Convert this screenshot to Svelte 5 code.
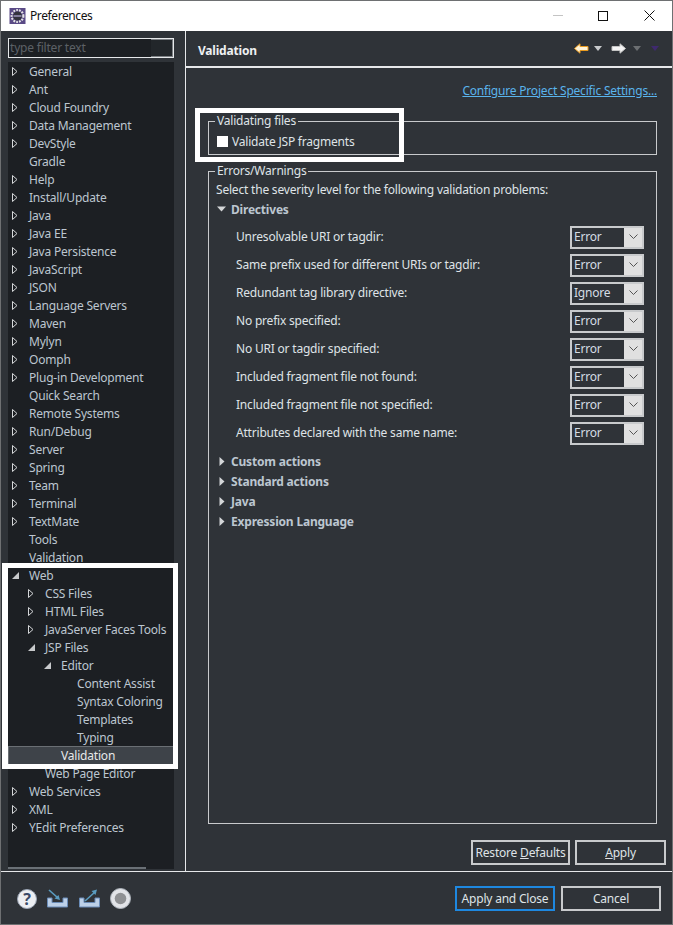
<script>
  const tree = [
    ['General', 0, 'c'], ['Ant', 0, 'c'], ['Cloud Foundry', 0, 'c'], ['Data Management', 0, 'c'],
    ['DevStyle', 0, 'c'], ['Gradle', 0, ''], ['Help', 0, 'c'], ['Install/Update', 0, 'c'],
    ['Java', 0, 'c'], ['Java EE', 0, 'c'], ['Java Persistence', 0, 'c'], ['JavaScript', 0, 'c'],
    ['JSON', 0, 'c'], ['Language Servers', 0, 'c'], ['Maven', 0, 'c'], ['Mylyn', 0, 'c'],
    ['Oomph', 0, 'c'], ['Plug-in Development', 0, 'c'], ['Quick Search', 0, ''], ['Remote Systems', 0, 'c'],
    ['Run/Debug', 0, 'c'], ['Server', 0, 'c'], ['Spring', 0, 'c'], ['Team', 0, 'c'],
    ['Terminal', 0, 'c'], ['TextMate', 0, 'c'], ['Tools', 0, ''], ['Validation', 0, ''],
    ['Web', 0, 'e'], ['CSS Files', 1, 'c'], ['HTML Files', 1, 'c'], ['JavaServer Faces Tools', 1, 'c'],
    ['JSP Files', 1, 'e'], ['Editor', 2, 'e'], ['Content Assist', 3, ''], ['Syntax Coloring', 3, ''],
    ['Templates', 3, ''], ['Typing', 3, ''], ['Validation', 2, '', true], ['Web Page Editor', 1, ''],
    ['Web Services', 0, 'c'], ['XML', 0, 'c'], ['YEdit Preferences', 0, 'c']
  ]
  const directives = [
    ['Unresolvable URI or tagdir:', 'Error'],
    ['Same prefix used for different URIs or tagdir:', 'Error'],
    ['Redundant tag library directive:', 'Ignore'],
    ['No prefix specified:', 'Error'],
    ['No URI or tagdir specified:', 'Error'],
    ['Included fragment file not found:', 'Error'],
    ['Included fragment file not specified:', 'Error'],
    ['Attributes declared with the same name:', 'Error']
  ]
  const sections = ['Custom actions', 'Standard actions', 'Java', 'Expression Language']
</script>

<div class="window">
  <header class="titlebar">
    <svg class="app-icon" width="17" height="16" viewBox="0 0 18 18">
      <rect width="18" height="18" fill="#5a4a86" />
      <circle cx="9" cy="9" r="6.6" fill="none" stroke="#e4e4e4" stroke-width="2.4" stroke-dasharray="2 1.2" />
      <circle cx="9" cy="9" r="5" fill="#33333d" />
      <rect x="4.5" y="8" width="9" height="2" fill="#8c86a8" />
    </svg>
    <span class="title">Preferences</span>
    <div class="win-controls">
      <span class="minimize"></span>
      <span class="maximize"></span>
      <svg width="11" height="11" viewBox="0 0 11 11"><path d="M0.5 0.5L10.5 10.5M10.5 0.5L0.5 10.5" stroke="#111" fill="none" /></svg>
    </div>
  </header>

  <div class="body">
    <aside class="sidebar">
      <div class="filter"><span class="filter-fill">type filter text</span></div>
      <div class="tree">
        {#each tree as [label, depth, state, selected]}
          <div class="tree-row" class:selected>
            <span class="indent" style:width="{depth * 16}px"></span>
            <span class="twisty">
              {#if state === 'c'}
                <svg width="6" height="9" viewBox="0 0 6 9"><path d="M0.5 0.5L5 4.5L0.5 8.5Z" fill="none" stroke="#d4d6d8" /></svg>
              {:else if state === 'e'}
                <svg width="7" height="7" viewBox="0 0 7 7"><path d="M7 0V7H0Z" fill="#c8cacc" /></svg>
              {/if}
            </span>
            <span class="tree-label">{label}</span>
          </div>
        {/each}
        <div class="tree-scroll"></div>
      </div>
    </aside>

    <main class="content">
      <div class="page-head">
        <h1>Validation</h1>
        <div class="nav">
          <svg width="15" height="11" viewBox="0 0 15 11"><path d="M0.5 5.5L6 0.8V3.5H14V7.5H6V10.2Z" fill="#fff4d8" stroke="#e89a20" /></svg>
          <span class="drop light"></span>
          <svg class="fwd" width="15" height="11" viewBox="0 0 15 11"><path d="M14.5 5.5L9 0.8V3.5H1V7.5H9V10.2Z" fill="#f4f4f4" stroke="#c4c4c4" /></svg>
          <span class="drop dim"></span>
          <span class="drop purple"></span>
        </div>
      </div>

      <div class="page-body">
        <div class="link-row"><span class="link">Configure Project Specific Settings...</span></div>

        <fieldset class="group files">
          <legend>Validating files</legend>
          <label class="check"><span class="box"></span>Validate JSP fragments</label>
        </fieldset>

        <fieldset class="group errors">
          <legend>Errors/Warnings</legend>
          <p class="intro">Select the severity level for the following validation problems:</p>
          <div class="section open">
            <svg width="9" height="6" viewBox="0 0 9 6"><path d="M0 0.5H9L4.5 5.5Z" fill="#d4d6d8" /></svg>
            <span>Directives</span>
          </div>
          <div class="rows">
            {#each directives as [label, value]}
              <div class="row">
                <span class="row-label">{label}</span>
                <span class="combo"><span class="combo-value">{value}</span><span class="combo-btn"><svg width="9" height="6" viewBox="0 0 9 6"><path d="M0.5 0.5L4.5 4.5L8.5 0.5" fill="none" stroke="#555" /></svg></span></span>
              </div>
            {/each}
          </div>
          <div class="closed-list">
            {#each sections as name}
              <div class="section">
                <svg width="6" height="9" viewBox="0 0 6 9"><path d="M0.5 0L5.5 4.5L0.5 9Z" fill="#d4d6d8" /></svg>
                <span>{name}</span>
              </div>
            {/each}
          </div>
        </fieldset>

        <div class="page-buttons">
          <button class="btn restore">Restore <u>D</u>efaults</button>
          <button class="btn apply"><u>A</u>pply</button>
        </div>
      </div>
    </main>
  </div>

  <footer class="footer">
    <div class="tools">
      <svg width="20" height="20" viewBox="0 0 20 20"><circle cx="10" cy="10" r="9.5" fill="#eceef2" stroke="#9aa4b4" /><text x="10" y="15.5" text-anchor="middle" class="help-q">?</text></svg>
      <svg width="23" height="20" viewBox="0 0 23 20"><path d="M1.5 9V18H21.5V9H17V13.5H6V9Z" fill="#bcd0e8" stroke="#6a8cb8" /><path d="M3 1L12 9" stroke="#5a9cc0" stroke-width="1.6" /><path d="M14 11L8.5 9.5L12.5 6Z" fill="#5a9cc0" /></svg>
      <svg width="23" height="20" viewBox="0 0 23 20"><path d="M1.5 9V18H21.5V9H17V13.5H6V9Z" fill="#bcd0e8" stroke="#6a8cb8" /><path d="M7 12L17 3" stroke="#5a9cc0" stroke-width="1.6" /><path d="M19 0.5L13.5 2L17.5 6Z" fill="#5a9cc0" /></svg>
      <svg width="21" height="21" viewBox="0 0 21 21"><circle cx="10.5" cy="10.5" r="10" fill="#e2e4e8" stroke="#aeb4bc" /><circle cx="10.5" cy="10.5" r="5.8" fill="#8f9194" /></svg>
    </div>
    <div class="footer-buttons">
      <button class="btn primary">Apply and Close</button>
      <button class="btn cancel">Cancel</button>
    </div>
  </footer>

  <div class="callout tree-callout"></div>
  <div class="callout files-callout"></div>
  <div class="frame"></div>
</div>

<style>
  :global(body) {
    margin: 0;
    background: #2f3338;
  }

  .window {
    position: relative;
    display: flex;
    flex-direction: column;
    width: 673px;
    height: 925px;
    box-sizing: border-box;
    overflow: hidden;
    background: #2f3338;
    color: #dfe3e7;
    font-family: "Noto Sans", "Open Sans", sans-serif;
    font-size: 12px;
    letter-spacing: -0.2px;
  }

  .titlebar {
    display: flex;
    align-items: center;
    flex: 0 0 31px;
    box-sizing: border-box;
    height: 31px;
    padding: 0 0 0 9px;
    background: #fff;
    color: #111;
  }

  .title {
    margin-left: 4px;
    letter-spacing: -0.4px;
  }

  .win-controls {
    display: flex;
    align-items: center;
    margin-left: auto;
  }

  .minimize {
    width: 10px;
    height: 1px;
    margin-right: 35px;
    background: #c4c4c4;
  }

  .maximize {
    width: 8px;
    height: 8px;
    margin-right: 36px;
    border: 1px solid #111;
  }

  .win-controls svg {
    margin-right: 18px;
  }

  .body {
    display: flex;
    height: 840px;
    border-bottom: 1px solid #e6e8ea;
  }

  .sidebar {
    flex: 0 0 186px;
    box-sizing: border-box;
    padding: 7px 11px 0 8px;
    border-right: 1px solid #e6e8ea;
  }

  .filter {
    box-sizing: border-box;
    height: 20px;
    border: 1px solid #e6e8ea;
    background: #22262a;
    overflow: hidden;
    box-shadow: inset 0 0 0 1px #7c8084;
  }

  .filter-fill {
    display: block;
    width: 141px;
    height: 18px;
    padding-left: 1px;
    line-height: 17px;
    background: #1c1f23;
    color: #5c6166;
    white-space: nowrap;
  }

  .tree {
    position: relative;
    height: 807px;
    margin-top: 5px;
    background: #1c1f23;
    color: #bcc6d0;
  }

  .tree-row {
    display: flex;
    align-items: center;
    height: 18px;
    white-space: nowrap;
  }

  .tree-row:first-child {
    margin-top: -1px;
  }

  .tree-row.selected {
    box-sizing: border-box;
    background: #3e4349;
    border: 1px solid #6a6f74;
    border-bottom: 0;
    color: #e6e8ea;
  }

  .tree-row.selected .indent {
    margin-left: -1px;
  }

  .tree-scroll {
    position: absolute;
    left: 0;
    bottom: 0;
    width: 138px;
    height: 2px;
    background: #6a7076;
  }

  .indent {
    flex: none;
  }

  .twisty {
    display: flex;
    flex: 0 0 21px;
    align-items: center;
    justify-content: flex-start;
    padding-left: 4px;
    box-sizing: border-box;
  }

  .content {
    display: flex;
    flex: 1;
    flex-direction: column;
    min-width: 0;
  }

  .page-head {
    display: flex;
    align-items: center;
    justify-content: space-between;
    box-sizing: border-box;
    height: 37px;
    padding: 3px 14px 0 12px;
    border-bottom: 2px solid #e6e8ea;
  }

  h1 {
    margin: 0;
    font-size: 12px;
    font-weight: 700;
    color: #eef0f2;
  }

  .nav {
    display: flex;
    align-items: center;
    margin-top: -3px;
  }

  .drop {
    width: 0;
    height: 0;
    margin-left: 5px;
    border-left: 4.5px solid transparent;
    border-right: 4.5px solid transparent;
    border-top: 5px solid #c8cacc;
  }

  .drop.dim {
    margin-left: 7px;
    border-left-width: 4px;
    border-right-width: 4px;
    border-top-color: #6c6f72;
  }

  .drop.purple {
    margin-left: 10px;
    border-left-width: 4px;
    border-right-width: 4px;
    border-top-color: #3f2a6e;
  }

  .fwd {
    margin-left: 9px;
  }

  .page-body {
    display: flex;
    flex: 1;
    flex-direction: column;
    padding: 0 16px 0 22px;
    min-height: 0;
  }

  .link-row {
    display: flex;
    justify-content: flex-end;
    height: 45px;
    padding-top: 14px;
    box-sizing: border-box;
  }

  .link {
    color: #5ab4ec;
    text-decoration: underline;
  }

  .group {
    margin: 0;
    padding: 0 7px;
    border: 1px solid #c8cacc;
    min-width: 0;
  }

  legend {
    padding: 0 2px;
    margin-left: -1px;
    line-height: 16px;
  }

  .files {
    height: 42px;
    box-sizing: border-box;
  }

  .check {
    display: flex;
    align-items: center;
    height: 20px;
    margin-top: 2px;
  }

  .box {
    width: 11px;
    height: 11px;
    margin: 0 4px 0 1px;
    background: #fff;
  }

  .errors {
    box-sizing: border-box;
    height: 661px;
    margin-top: 8px;
  }

  .intro {
    margin: 2px 0 0;
    line-height: 18px;
  }

  .section {
    display: flex;
    align-items: center;
    height: 20px;
    font-weight: 700;
    color: #bcc6d0;
  }

  .section svg {
    margin: 0 6px 0 3px;
  }

  .section.open svg {
    margin: 0 5px 0 1px;
  }

  .rows {
    display: flex;
    flex-direction: column;
    padding: 4px 0 0 20px;
  }

  .row {
    display: flex;
    align-items: center;
    justify-content: space-between;
    height: 28px;
    padding-right: 5px;
  }

  .row-label {
    padding-bottom: 1px;
  }

  .combo {
    display: flex;
    box-sizing: border-box;
    width: 74px;
    height: 23px;
    border: 2px solid #c8cacc;
  }

  .combo-value {
    flex: 1;
    padding-left: 2px;
    line-height: 18px;
    color: #d4dce4;
  }

  .combo-btn {
    display: flex;
    align-items: center;
    justify-content: center;
    width: 18px;
    background: #e0e0e0;
  }

  .closed-list {
    margin-top: 4px;
  }

  .page-buttons {
    display: flex;
    justify-content: flex-end;
    gap: 5px;
    margin: 16px -9px 0 0;
  }

  .btn {
    box-sizing: border-box;
    height: 25px;
    padding: 0;
    border: 2px solid #c8cacc;
    background: #2f3338;
    color: #dfe3e7;
    font: inherit;
    letter-spacing: inherit;
  }

  .restore {
    width: 99px;
  }

  .apply {
    width: 91px;
  }

  .footer {
    display: flex;
    flex: 1;
    align-items: center;
    justify-content: space-between;
    padding: 0 12px 0 17px;
  }

  .tools {
    display: flex;
    align-items: center;
    gap: 9px;
  }

  .help-q {
    font-size: 16px;
    font-weight: 700;
    fill: #3a4a68;
  }

  .footer-buttons {
    display: flex;
    gap: 6px;
  }

  .primary {
    width: 100px;
    border-color: #1e88e0;
  }

  .cancel {
    width: 100px;
  }

  .callout {
    position: absolute;
    box-sizing: border-box;
    border: 5px solid #fff;
    pointer-events: none;
  }

  .tree-callout {
    left: 2px;
    top: 563px;
    width: 176px;
    height: 206px;
    border-left-width: 6px;
  }

  .files-callout {
    left: 195px;
    top: 108px;
    width: 209px;
    height: 54px;
  }

  .frame {
    position: absolute;
    inset: 0;
    border: 1px solid #6e7072;
    pointer-events: none;
  }
</style>
